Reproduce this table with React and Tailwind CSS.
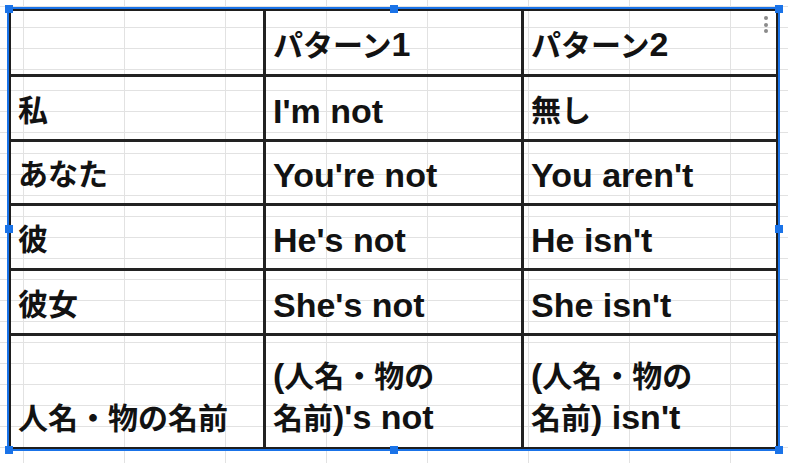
// Spreadsheet view with an embedded, selected table image
const J = ({ children }) => <span className="text-[30px]">{children}</span>;

const rows = [
  [null, <><J>パターン</J>1</>, <><J>パターン</J>2</>],
  [<J>私</J>, "I'm not", <J>無し</J>],
  [<J>あなた</J>, "You're not", "You aren't"],
  [<J>彼</J>, "He's not", "He isn't"],
  [<J>彼女</J>, "She's not", "She isn't"],
  [
    <J>人名・物の名前</J>,
    <>
      (<J>人名・物の</J>
      <br />
      <J>名前</J>)'s not
    </>,
    <>
      (<J>人名・物の</J>
      <br />
      <J>名前</J>) isn't
    </>,
  ],
];

function Handle({ className }) {
  return <div className={`absolute w-[8px] h-[8px] bg-[#1a73e8] ${className}`} />;
}

export default function App() {
  return (
    <div className="w-[788px] h-[463px] overflow-hidden bg-white bg-[linear-gradient(to_right,#e2e2e2_1px,transparent_1px),linear-gradient(to_bottom,#e2e2e2_1px,transparent_1px)] bg-[length:101px_21px] bg-[position:23px_6px] pt-[7px] pl-[7px]">
      <div className="relative w-[773px] h-[444px] border-2 border-[#1a73e8]">
        <div className="grid grid-cols-[255px_258px_252px] grid-rows-[66px_65px_64px_65px_65px_111px] w-[769px] h-[440px] border-2 border-[#1e1e1e] font-['Liberation_Sans','Noto_Sans_CJK_JP',sans-serif] font-bold text-[34px] leading-[40px] text-[#121212]">
          {rows.map((row, r) =>
            row.map((cell, c) => (
              <div
                key={`${r}-${c}`}
                className={`flex items-end pl-[7px] pb-[8px] border-[#222] ${c < 2 ? "border-r-[3px]" : ""} ${r < 5 ? "border-b-[3px]" : ""}`}
              >
                <div className="whitespace-nowrap">{cell}</div>
              </div>
            ))
          )}
        </div>

        {/* kebab menu of the embedded image */}
        <div className="absolute right-[10px] top-[7px] flex flex-col gap-[2.5px]">
          <span className="w-[4px] h-[4px] rounded-full bg-[#8a8a8a]" />
          <span className="w-[4px] h-[4px] rounded-full bg-[#8a8a8a]" />
          <span className="w-[4px] h-[4px] rounded-full bg-[#8a8a8a]" />
        </div>

        {/* selection handles */}
        <Handle className="-left-[4px] -top-[4px]" />
        <Handle className="left-1/2 -translate-x-1/2 -top-[4px]" />
        <Handle className="-right-[5px] -top-[4px]" />
        <Handle className="-left-[4px] top-1/2 -translate-y-1/2" />
        <Handle className="-right-[5px] top-1/2 -translate-y-1/2" />
        <Handle className="-left-[4px] -bottom-[5px]" />
        <Handle className="left-1/2 -translate-x-1/2 -bottom-[5px]" />
        <Handle className="-right-[5px] -bottom-[5px]" />
      </div>
    </div>
  );
}
